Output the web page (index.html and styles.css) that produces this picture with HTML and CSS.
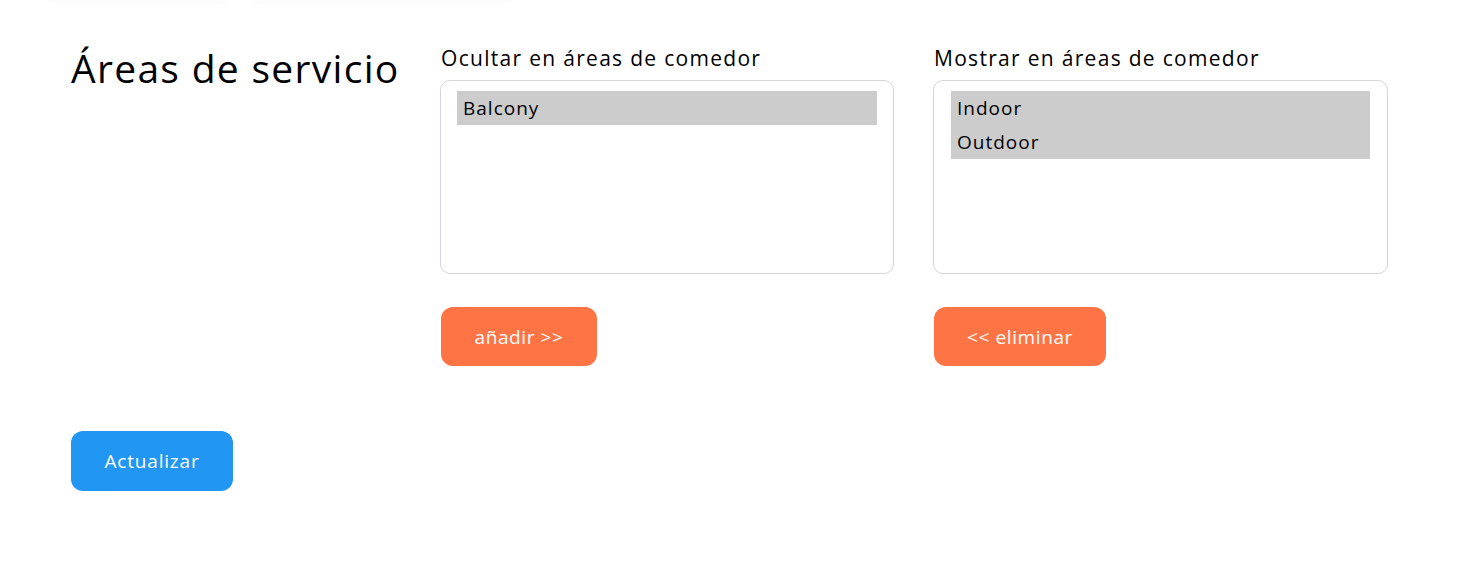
FILE: index.html
```html
<!DOCTYPE html>
<html lang="es">
<head>
<meta charset="utf-8">
<title>Áreas de servicio</title>
<link rel="stylesheet" href="styles.css">
</head>
<body>
<div class="top-shadow"><span class="tab"></span><span class="tab tab-2"></span></div>
<main class="page">
  <section class="areas">
    <h2 class="title">Áreas de servicio</h2>
    <div class="col">
      <div class="label">Ocultar en áreas de comedor</div>
      <div class="listbox">
        <div class="option">Balcony</div>
      </div>
      <button class="btn btn-orange btn-add">añadir &gt;&gt;</button>
    </div>
    <div class="col col-right">
      <div class="label">Mostrar en áreas de comedor</div>
      <div class="listbox">
        <div class="option">Indoor</div>
        <div class="option">Outdoor</div>
      </div>
      <button class="btn btn-orange btn-remove">&lt;&lt; eliminar</button>
    </div>
  </section>
  <button class="btn btn-blue">Actualizar</button>
</main>
</body>
</html>
```

FILE: styles.css
```css
html, body {
  margin: 0;
  padding: 0;
  background: #ffffff;
}

body {
  font-family: "Open Sans", "DejaVu Sans", sans-serif;
  color: #000;
  position: relative;
  height: 561px;
  overflow: hidden;
}

.top-shadow {
  position: absolute;
  top: -20px;
  left: 35px;
  display: flex;
}

.tab {
  display: block;
  width: 205px;
  height: 24px;
  border-radius: 0 0 40px 40px;
  background: #fcfcfc;
}

.tab-2 {
  width: 285px;
}

.page {
  padding: 44px 77px 0 71px;
}

.areas {
  display: flex;
  align-items: flex-start;
}

.title {
  width: 369px;
  flex: none;
  margin: 0;
  font-size: 39px;
  font-weight: 400;
  line-height: 48px;
  letter-spacing: 1.3px;
}

.col {
  width: 454px;
  flex: none;
}

.col-right {
  width: 455px;
  margin-left: 39px;
}

.label {
  font-size: 21px;
  line-height: 28px;
  letter-spacing: 1.3px;
  margin-bottom: 8px;
  padding-left: 1px;
}

.listbox {
  box-sizing: border-box;
  height: 194px;
  border: 1px solid #d4d5dc;
  border-radius: 10px;
  padding: 10px 16px;
}

.col-right .listbox {
  padding: 10px 17px;
}

.option {
  background: #cccccc;
  height: 34px;
  line-height: 34px;
  font-size: 19px;
  letter-spacing: 1px;
  padding-left: 6px;
}

.btn {
  display: block;
  box-sizing: border-box;
  border: none;
  border-radius: 12px;
  color: #ffffff;
  font-family: inherit;
  font-size: 19px;
  letter-spacing: 0.6px;
  height: 59px;
  padding: 0;
  text-align: center;
  cursor: pointer;
}

.btn-orange {
  background: #ff7444;
  margin-top: 33px;
  margin-left: 1px;
}

.btn-add {
  width: 156px;
}

.btn-remove {
  width: 172px;
}

.btn-blue {
  background: #2196f3;
  height: 60px;
  margin-top: 65px;
  width: 162px;
  letter-spacing: 0.8px;
}
```
